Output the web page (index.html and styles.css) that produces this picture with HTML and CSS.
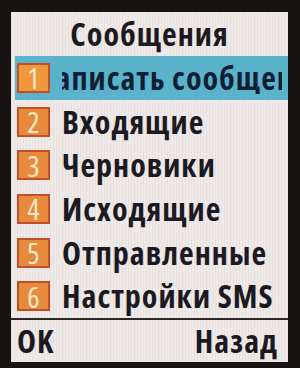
FILE: index.html
```html
<!DOCTYPE html>
<html lang="ru">
<head>
<meta charset="utf-8">
<title>Сообщения</title>
<link rel="stylesheet" href="styles.css">
</head>
<body>
<div class="screen">
  <div class="title">Сообщения</div>
  <ul class="menu">
    <li class="item active"><span class="badge">1</span><span class="label"><span class="scroll">Написать сообщение</span></span></li>
    <li class="item"><span class="badge">2</span><span class="label">Входящие</span></li>
    <li class="item"><span class="badge">3</span><span class="label">Черновики</span></li>
    <li class="item"><span class="badge">4</span><span class="label">Исходящие</span></li>
    <li class="item"><span class="badge">5</span><span class="label">Отправленные</span></li>
    <li class="item"><span class="badge">6</span><span class="label">Настройки SMS</span></li>
  </ul>
  <div class="softkeys">
    <span class="key">OK</span>
    <span class="key">Назад</span>
  </div>
</div>
</body>
</html>
```

FILE: styles.css
```css
html, body {
  margin: 0;
  padding: 0;
}
body {
  background: #161312;
  width: 300px;
  height: 368px;
  overflow: hidden;
}
.screen {
  margin: 12px 12px 0 11px;
  height: 350px;
  display: flex;
  flex-direction: column;
  background-color: #efe9e7;
  background-image: repeating-linear-gradient(90deg, rgba(120,90,90,0.06) 0 1px, transparent 1px 3px);
  font-family: "Open Sans", "Liberation Sans", sans-serif;
  font-stretch: 75%;
  font-weight: bold;
  letter-spacing: 1px;
  color: #1b1a22;
}
.title {
  height: 44px;
  display: flex;
  align-items: center;
  justify-content: center;
  font-size: 32px;
  line-height: 1;
}
.menu {
  list-style: none;
  margin: 0;
  padding: 0;
  height: 262px;
  display: flex;
  flex-direction: column;
}
.item {
  flex: 1;
  display: flex;
  align-items: center;
  margin-left: 4px;
  padding-left: 2px;
  font-size: 32px;
  line-height: 1;
}
.item.active {
  background-color: #5ab3cb;
  color: #0e1f36;
}
.badge {
  flex: none;
  width: 29px;
  height: 26px;
  border: 2px solid #c24e2a;
  background: #e88a3c;
  color: #fbe7cb;
  font-weight: normal;
  letter-spacing: 0;
  font-size: 29px;
  display: flex;
  align-items: center;
  justify-content: center;
}
.active .badge {
  background: #f0983c;
}
.label {
  margin-left: 12px;
  white-space: nowrap;
}
.active .label {
  overflow: hidden;
  width: 220px;
}
.scroll {
  display: inline-block;
  margin-left: -26px;
}
.softkeys {
  flex: 1;
  border-top: 2px solid #2a2626;
  display: flex;
  justify-content: space-between;
  align-items: center;
  padding: 0 10px 0 6px;
  font-size: 32px;
  line-height: 1;
}
```
